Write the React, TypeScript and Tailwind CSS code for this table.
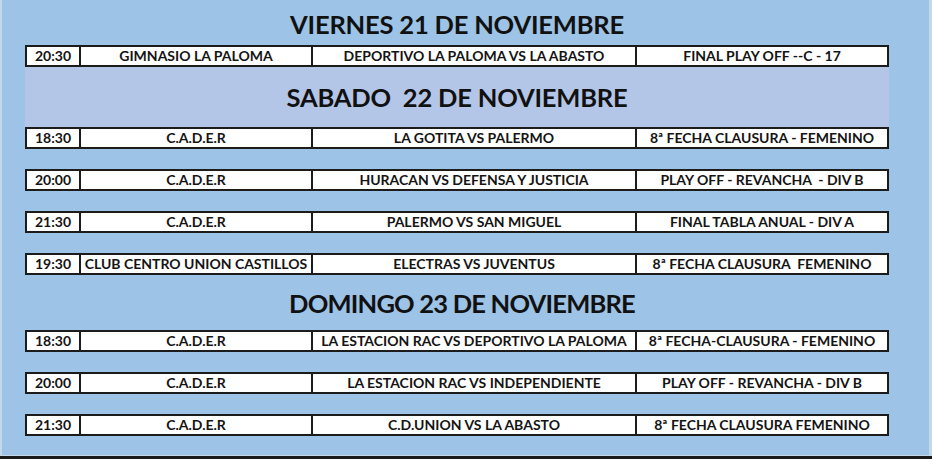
interface Match {
  time: string;
  venue: string;
  game: string;
  category: string;
}

const viernes: Match[] = [
  {
    time: "20:30",
    venue: "GIMNASIO LA PALOMA",
    game: "DEPORTIVO LA PALOMA VS LA ABASTO",
    category: "FINAL PLAY OFF --C - 17",
  },
];

const sabado: Match[] = [
  {
    time: "18:30",
    venue: "C.A.D.E.R",
    game: "LA GOTITA VS PALERMO",
    category: "8ª FECHA CLAUSURA - FEMENINO",
  },
  {
    time: "20:00",
    venue: "C.A.D.E.R",
    game: "HURACAN VS DEFENSA Y JUSTICIA",
    category: "PLAY OFF - REVANCHA  - DIV B",
  },
  {
    time: "21:30",
    venue: "C.A.D.E.R",
    game: "PALERMO VS SAN MIGUEL",
    category: "FINAL TABLA ANUAL - DIV A",
  },
  {
    time: "19:30",
    venue: "CLUB CENTRO UNION CASTILLOS",
    game: "ELECTRAS VS JUVENTUS",
    category: "8ª FECHA CLAUSURA  FEMENINO",
  },
];

const domingo: Match[] = [
  {
    time: "18:30",
    venue: "C.A.D.E.R",
    game: "LA ESTACION RAC VS DEPORTIVO LA PALOMA",
    category: "8ª FECHA-CLAUSURA - FEMENINO",
  },
  {
    time: "20:00",
    venue: "C.A.D.E.R",
    game: "LA ESTACION RAC VS INDEPENDIENTE",
    category: "PLAY OFF - REVANCHA - DIV B",
  },
  {
    time: "21:30",
    venue: "C.A.D.E.R",
    game: "C.D.UNION VS LA ABASTO",
    category: "8ª FECHA CLAUSURA FEMENINO",
  },
];

// one table row, Excel-like borders
const Row = ({ m }: { m: Match }) => (
  <div className="flex h-[22px] w-[864px] border-2 border-[#1c1c1c] bg-white text-[14px] font-bold leading-none text-[#141414] whitespace-pre">
    <div className="flex w-[52px] items-center justify-center">{m.time}</div>
    <div className="flex w-[232px] items-center justify-center border-l-2 border-[#1c1c1c]">
      {m.venue}
    </div>
    <div className="flex w-[324px] items-center justify-center border-l-2 border-[#1c1c1c]">
      {m.game}
    </div>
    <div className="flex flex-1 items-center justify-center border-l-2 border-[#1c1c1c]">
      {m.category}
    </div>
  </div>
);

const Title = ({ children, tight }: { children: string; tight?: boolean }) => (
  <h1
    className={`text-center text-[25.5px] font-bold leading-none text-[#111] whitespace-pre ${
      tight ? "tracking-[-0.8px]" : "tracking-[-0.2px]"
    }`}>
    {children}
  </h1>
);

const App = () => {
  return (
    <div
      className="flex h-[459px] w-[932px] flex-col overflow-hidden bg-[#9dc3e6]"
      style={{ fontFamily: "Lato, 'Open Sans', sans-serif" }}>
      <div className="flex flex-1 border-l-[2px] border-r-[3px] border-[#c4d8ec]">
        <div className="flex flex-col pl-[23px]">
          {/* Viernes */}
          <div className="flex h-[45px] items-center justify-center pt-[4px]">
            <Title>VIERNES 21 DE NOVIEMBRE</Title>
          </div>
          {viernes.map((m) => (
            <Row key={m.time + m.game} m={m} />
          ))}

          {/* Sabado */}
          <div className="flex h-[60px] w-[864px] items-center justify-center bg-[#b4c6e7] pt-[2px]">
            <Title>SABADO  22 DE NOVIEMBRE</Title>
          </div>
          <div className="flex flex-col gap-[20px]">
            {sabado.map((m) => (
              <Row key={m.time + m.game} m={m} />
            ))}
          </div>

          {/* Domingo */}
          <div className="flex h-[55px] w-[864px] items-center justify-center pt-[2px] pl-[10px]">
            <Title tight>DOMINGO 23 DE NOVIEMBRE</Title>
          </div>
          <div className="flex flex-col gap-[20px]">
            {domingo.map((m) => (
              <Row key={m.time + m.game} m={m} />
            ))}
          </div>
        </div>
      </div>
      <div className="h-[1px] bg-[#c4d8ec]" />
      <div className="h-[3px] bg-[#1a1a1a]" />
    </div>
  );
};

export default App;
